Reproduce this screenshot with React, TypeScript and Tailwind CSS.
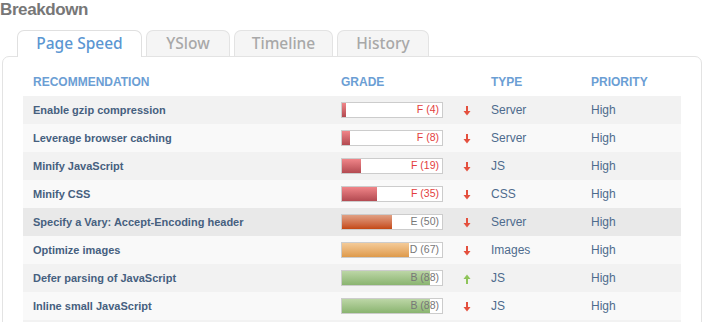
import React from "react";

type Row = {
  name: string;
  grade: string;
  score: number;
  up?: boolean;
  type: string;
  hover?: boolean;
};

const rows: Row[] = [
  { name: "Enable gzip compression", grade: "F", score: 4, type: "Server" },
  { name: "Leverage browser caching", grade: "F", score: 8, type: "Server" },
  { name: "Minify JavaScript", grade: "F", score: 19, type: "JS" },
  { name: "Minify CSS", grade: "F", score: 35, type: "CSS" },
  { name: "Specify a Vary: Accept-Encoding header", grade: "E", score: 50, type: "Server", hover: true },
  { name: "Optimize images", grade: "D", score: 67, type: "Images" },
  { name: "Defer parsing of JavaScript", grade: "B", score: 88, up: true, type: "JS" },
  { name: "Inline small JavaScript", grade: "B", score: 88, type: "JS" },
];

const fillClass: Record<string, string> = {
  F: "bg-linear-to-b from-[#f08589] to-[#b34a51]",
  E: "bg-linear-to-b from-[#e0a083] to-[#c44810]",
  D: "bg-linear-to-b from-[#f4cb98] to-[#de9a4a]",
  B: "bg-linear-to-b from-[#bcd6a6] to-[#8ab470]",
};

function Arrow({ up }: { up?: boolean }) {
  const c = up ? "#8fc45a" : "#e4503e";
  return (
    <svg width="8" height="10" viewBox="0 0 8 10" className={up ? "rotate-180" : ""}>
      <rect x="3" y="0" width="2" height="6" fill={c} />
      <polygon points="0.5,5 7.5,5 4,9.5" fill={c} />
    </svg>
  );
}

const tabs = [
  { label: "Page Speed", w: "w-[125px]" },
  { label: "YSlow", w: "w-[84px]" },
  { label: "Timeline", w: "w-[99px]" },
  { label: "History", w: "w-[92px]" },
];

export default function App() {
  return (
    <div className="w-[706px] h-[322px] overflow-hidden bg-white font-['Liberation_Sans',Arial,sans-serif]">
      <div className="text-[17px] leading-[20px] font-bold tracking-[-0.4px] text-[#777777]">Breakdown</div>
      <div className="relative z-10 flex gap-[4px] pl-[17px] mt-[10px] -mb-px font-['Noto_Sans',sans-serif] font-medium text-[15.5px] leading-[24px]">
        {tabs.map((t, i) =>
          i === 0 ? (
            <div
              key={t.label}
              className={t.w + " h-[27px] text-center rounded-t-[7px] border border-b-0 border-[#e0e0e0] bg-white text-[#5b96d2]"}
            >
              {t.label}
            </div>
          ) : (
            <div
              key={t.label}
              className={t.w + " h-[26px] text-center rounded-t-[7px] border border-b-0 border-[#e3e3e3] bg-[#f5f5f5] text-[#a8a8a8]"}
            >
              {t.label}
            </div>
          )
        )}
      </div>
      <div className="ml-[2px] w-[700px] h-[400px] rounded-t-[7px] border border-[#e3e3e3] pt-[11px] pl-[20px]">
        <div className="w-[658px]">
          <div className="grid grid-cols-[308px_150px_100px_100px] h-[28px] items-center text-[12px] font-bold text-[#6b9ed4]">
            <div className="pl-[10px]">RECOMMENDATION</div>
            <div className="pl-[10px]">GRADE</div>
            <div className="pl-[10px]">TYPE</div>
            <div className="pl-[10px]">PRIORITY</div>
          </div>
          {rows.map((r, i) => (
            <div
              key={i}
              className={
                "grid grid-cols-[308px_150px_100px_100px] h-[28px] items-center " +
                (r.hover ? "bg-[#e9e9e9]" : i % 2 === 0 ? "bg-[#f2f2f2]" : "bg-[#f9f9f9]")
              }
            >
              <div className="pl-[10px] text-[11px] font-bold text-[#46607f]">{r.name}</div>
              <div className="pl-[10px] flex items-center">
                <div className="relative w-[102px] h-[16px] border border-[#cccccc] bg-white">
                  <div className={"h-full " + fillClass[r.grade]} style={{ width: `${r.score}px` }} />
                  <div
                    className={
                      "absolute right-[3px] top-0 h-full flex items-center text-[10.5px] " +
                      (r.grade === "F" ? "text-[#e33e3e]" : "text-[#777777]")
                    }
                  >
                    {r.grade} ({r.score})
                  </div>
                </div>
                <div className="ml-[20px] mt-[2px] flex items-center">
                  <Arrow up={r.up} />
                </div>
              </div>
              <div className="pl-[10px] text-[12px] text-[#4e6b8d]">{r.type}</div>
              <div className="pl-[10px] text-[12px] text-[#4e6b8d]">High</div>
            </div>
          ))}
          <div className="h-[28px] bg-[#f2f2f2]" />
        </div>
      </div>
    </div>
  );
}
